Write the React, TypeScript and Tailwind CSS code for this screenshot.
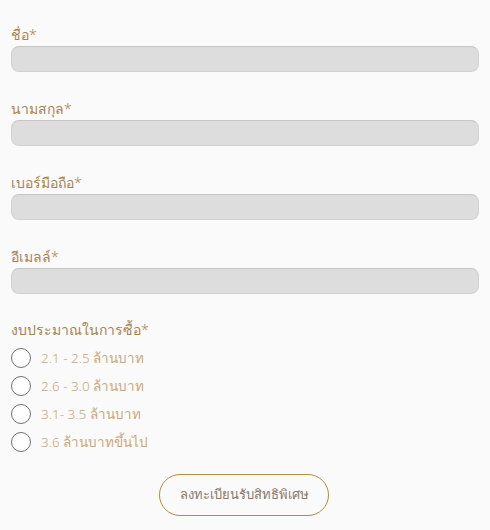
const fields = ['ชื่อ*', 'นามสกุล*', 'เบอร์มือถือ*', 'อีเมลล์*']

const budgets = ['2.1 - 2.5 ล้านบาท', '2.6 - 3.0 ล้านบาท', '3.1- 3.5 ล้านบาท', '3.6 ล้านบาทขึ้นไป']

export default function App() {
  return (
    <div className="w-[490px] h-[530px] bg-[#fafafa] px-[11px] pt-[25px] font-['Noto_Sans',sans-serif] font-light overflow-hidden">
      {fields.map((label) => (
        <div key={label} className="mb-[27px]">
          <div className="text-[14px] leading-[20px] text-[#a8824e] mb-[1px]">{label}</div>
          <div className="h-[26px] w-[468px] rounded-[8px] bg-[#dddddd] border border-[#d2d2d2] border-t-[#c6c6c6]" />
        </div>
      ))}

      <div className="text-[14px] leading-[20px] text-[#a8824e] -mt-[1px]">งบประมาณในการซื้อ*</div>
      <div className="flex flex-col mt-[4px]">
        {budgets.map((b) => (
          <label key={b} className="flex items-center h-[28px] gap-[10px]">
            <span className="w-[20px] h-[20px] rounded-full border-[1.5px] border-[#707070] bg-white shrink-0" />
            <span className="text-[13.5px] text-[#c9a978]">{b}</span>
          </label>
        ))}
      </div>

      <div className="flex justify-center mt-[18px] pr-[2px]">
        <button className="w-[170px] h-[42px] rounded-full border border-[#b48d3e] text-[13px] text-[#8a7868] bg-transparent">
          ลงทะเบียนรับสิทธิพิเศษ
        </button>
      </div>
    </div>
  )
}
